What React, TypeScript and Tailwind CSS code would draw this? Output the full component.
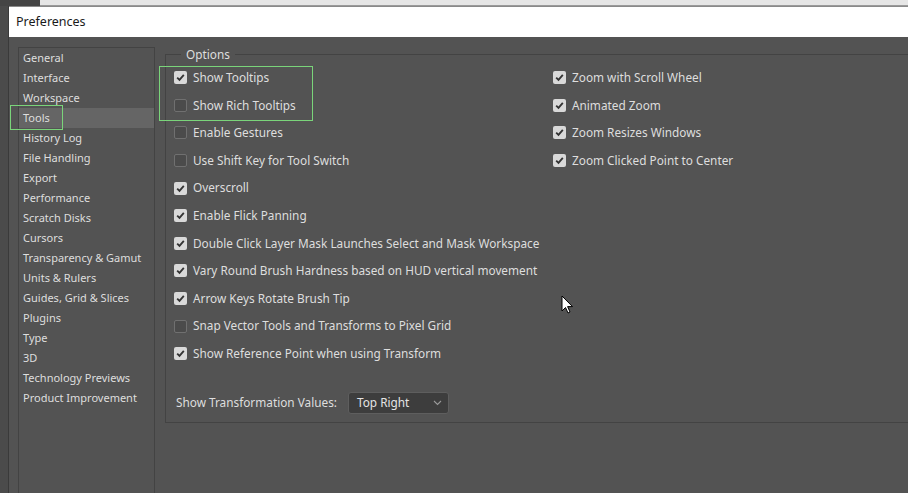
const sections = [
  'General',
  'Interface',
  'Workspace',
  'Tools',
  'History Log',
  'File Handling',
  'Export',
  'Performance',
  'Scratch Disks',
  'Cursors',
  'Transparency & Gamut',
  'Units & Rulers',
  'Guides, Grid & Slices',
  'Plugins',
  'Type',
  '3D',
  'Technology Previews',
  'Product Improvement',
];

const leftOptions: [string, boolean][] = [
  ['Show Tooltips', true],
  ['Show Rich Tooltips', false],
  ['Enable Gestures', false],
  ['Use Shift Key for Tool Switch', false],
  ['Overscroll', true],
  ['Enable Flick Panning', true],
  ['Double Click Layer Mask Launches Select and Mask Workspace', true],
  ['Vary Round Brush Hardness based on HUD vertical movement', true],
  ['Arrow Keys Rotate Brush Tip', true],
  ['Snap Vector Tools and Transforms to Pixel Grid', false],
  ['Show Reference Point when using Transform', true],
];

const rightOptions: [string, boolean][] = [
  ['Zoom with Scroll Wheel', true],
  ['Animated Zoom', true],
  ['Zoom Resizes Windows', true],
  ['Zoom Clicked Point to Center', true],
];

function Checkbox({ checked }: { checked: boolean }) {
  if (checked) {
    return (
      <span className="flex h-[13px] w-[13px] shrink-0 items-center justify-center rounded-[2px] bg-[#d9d9d9]">
        <svg width="9" height="9" viewBox="0 0 9 9">
          <path d="M1.2 4.6 L3.5 6.9 L7.8 1.9" fill="none" stroke="#333" strokeWidth="1.8" />
        </svg>
      </span>
    );
  }
  return <span className="h-[13px] w-[13px] shrink-0 rounded-[2px] border border-[#707070] bg-[#4b4b4b]" />;
}

function OptionRow({ label, checked }: { label: string; checked: boolean }) {
  return (
    <div className="flex h-[27.6px] items-center gap-[6px] whitespace-nowrap">
      <Checkbox checked={checked} />
      <span>{label}</span>
    </div>
  );
}

export default function App() {
  return (
    <div
      className="relative flex h-[493px] w-[908px] flex-col overflow-hidden bg-[#4b4b4b] text-[11.8px] text-[#dedede]"
      style={{ fontFamily: '"Noto Sans", "Open Sans", sans-serif' }}
    >
      {/* window strip behind the dialog */}
      <div className="flex h-[6px] shrink-0">
        <div className="w-[40px] bg-[#454545]" />
        <div className="flex-1 border-b border-[#9a9a9a] bg-[#e6e6e6]" />
      </div>

      <div className="ml-[8px] flex flex-1 flex-col border-l border-[#3a3a3a] bg-[#535353]">
        {/* Title bar */}
        <div className="flex h-[31px] shrink-0 items-center border-t border-[#8a8a8a] bg-white pl-[7px] text-[12.5px] text-[#1a1a1a]">
          Preferences
        </div>

        <div className="flex flex-1 pt-[10px]">
          {/* Section list */}
          <div className="ml-[9px] w-[137px] shrink-0 border border-b-0 border-[#434343] text-[11px]">
            {sections.map((s) => (
              <div
                key={s}
                className={`h-[20px] whitespace-nowrap pl-[4px] leading-[20px] ${s === 'Tools' ? 'bg-[#656565]' : ''}`}
              >
                {s}
              </div>
            ))}
          </div>

          {/* Options */}
          <div className="ml-[10px] flex-1">
            <fieldset className="-mt-px w-[760px] border border-[#434343] pl-[8px] pb-[8px]">
              <legend className="ml-[7px] px-[5px] leading-[16px]">Options</legend>
              <div className="flex pt-[2px]">
                <div className="w-[379px]">
                  {leftOptions.map(([l, c]) => (
                    <OptionRow key={l} label={l} checked={c} />
                  ))}
                </div>
                <div>
                  {rightOptions.map(([l, c]) => (
                    <OptionRow key={l} label={l} checked={c} />
                  ))}
                </div>
              </div>
              <div className="mt-[24px] flex items-center pl-[2px]">
                <span className="w-[172px]">Show Transformation Values:</span>
                <div className="flex h-[22px] w-[101px] items-center justify-between rounded-[3px] border border-[#5e5e5e] bg-[#3d3d3d] pl-[8px] pr-[6px] text-[#e4e4e4]">
                  <span>Top Right</span>
                  <svg width="9" height="6" viewBox="0 0 9 6">
                    <path d="M1 1 L4.5 4.5 L8 1" fill="none" stroke="#9a9a9a" strokeWidth="1.1" />
                  </svg>
                </div>
              </div>
            </fieldset>
          </div>
        </div>
      </div>

      {/* highlight annotations */}
      <div className="absolute left-[10px] top-[105px] h-[25px] w-[53px] border border-[#7ad47a]" />
      <div className="absolute left-[159px] top-[66px] h-[55px] w-[154px] border border-[#7ad47a]" />

      {/* mouse pointer */}
      <svg className="absolute left-[561px] top-[295px]" width="13" height="20" viewBox="0 0 13 20">
        <path d="M1 1 L1 16 L4.5 12.5 L7 18 L9 17 L6.6 11.6 L11.5 11.6 Z" fill="#fff" stroke="#000" strokeWidth="1" />
      </svg>
    </div>
  );
}
